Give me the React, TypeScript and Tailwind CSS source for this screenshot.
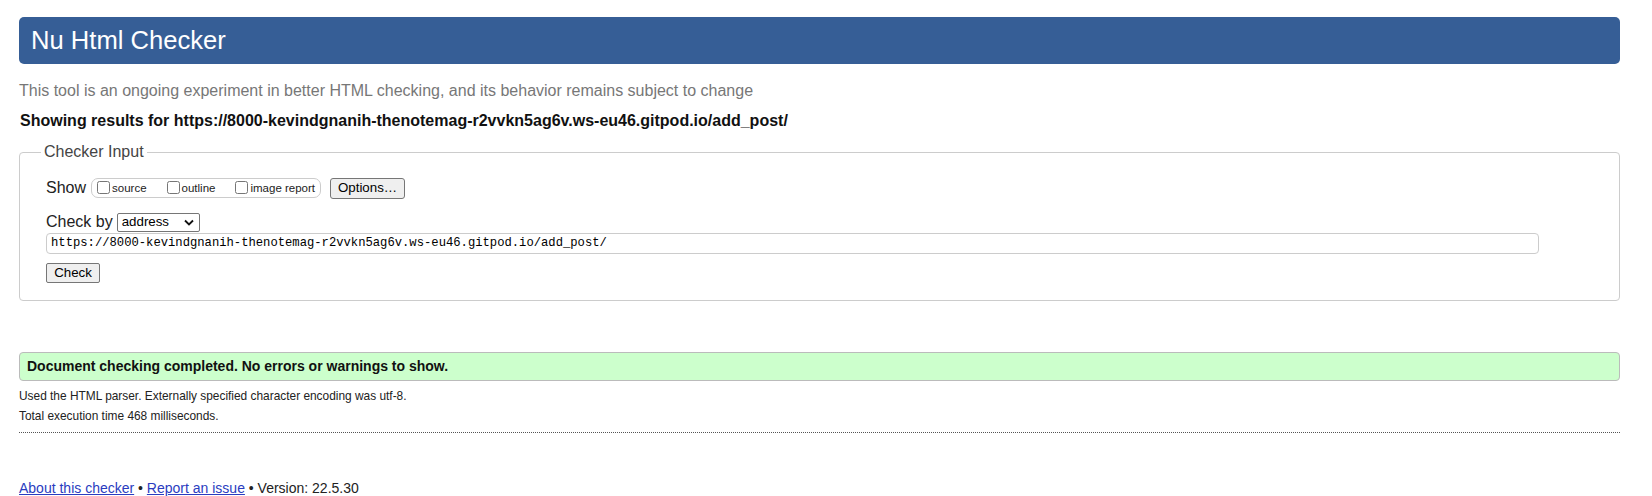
import React from 'react';

const CHECK_URL = 'https://8000-kevindgnanih-thenotemag-r2vvkn5ag6v.ws-eu46.gitpod.io/add_post/';

function ShowOption({label}: {label: string}) {
  return (
    <label className="flex items-end gap-[2px]">
      <input type="checkbox" className="w-[13px] h-[13px] m-0 mb-[1px]" />
      <span className="text-[11.5px] leading-[14px] text-[#222]">{label}</span>
    </label>
  );
}

export default function App() {
  return (
    <div className="w-[1652px] h-[496px] overflow-hidden bg-white pt-[17px] pl-[19px] font-['Liberation_Sans',Arial,sans-serif] text-[#222]">
      <div className="w-[1601px]">
        {/* title bar */}
        <h1 className="h-[47px] rounded-[5px] bg-[#365e96] pl-[12px] text-[25.6px] leading-[47px] text-white">Nu Html Checker</h1>

        <p className="mt-[17px] text-[16px] leading-[20px] text-[#777]">
          This tool is an ongoing experiment in better HTML checking, and its behavior remains subject to change
        </p>
        <p className="mt-[10px] pl-[1px] text-[16px] leading-[20px] font-bold text-[#111]">
          Showing results for {CHECK_URL}
        </p>

        {/* checker input */}
        <fieldset className="mt-[12px] rounded-[4px] border border-[#ccc] pl-[21px] pr-[20px] pb-[16px]">
          <legend className="px-[3px] text-[16px] leading-[18px] text-[#444]">Checker Input</legend>
          <div className="pl-[5px]">
            <div className="mt-[17px] flex h-[20px] items-center">
              <span className="text-[16px] leading-[18px]">Show</span>
              <div className="ml-[5px] flex h-[20px] items-center gap-[20px] rounded-[7px] border border-[#ccc] pl-[5px] pr-[5px]">
                <ShowOption label="source" />
                <ShowOption label="outline" />
                <ShowOption label="image report" />
              </div>
              <button className="ml-[9px] h-[21px] w-[75px] rounded-[3px] border border-[#767676] bg-[#efefef] text-[13.3px] leading-[18px] text-black">
                Options…
              </button>
            </div>

            <div className="mt-[15px] flex h-[18px] items-center">
              <span className="text-[16px] leading-[18px]">Check by</span>
              <div className="ml-[4px] flex h-[19px] w-[83px] items-center justify-between rounded-[2px] border border-[#767676] pl-[4px] pr-[5px] text-[13.3px] text-black">
                <span>address</span>
                <svg width="10" height="7" viewBox="0 0 10 7" fill="none">
                  <path d="M1 1.5l4 4 4-4" stroke="#111" strokeWidth="1.8" />
                </svg>
              </div>
            </div>

            <div className="mt-[2px] flex h-[21px] w-[1493px] items-center rounded-[4px] border border-[#ccc] pl-[4px] font-['Liberation_Mono',monospace] text-[12.2px] text-black">
              {CHECK_URL}
            </div>

            <button className="mt-[9px] h-[20px] w-[54px] rounded-[2px] border border-[#767676] bg-[#efefef] text-[13.3px] leading-[18px] text-black">
              Check
            </button>
          </div>
        </fieldset>

        {/* result */}
        <div className="mt-[51px] flex h-[29px] items-center rounded-[4px] border border-[#bbb] bg-[#ccffcc] pl-[7px] text-[14px] font-bold text-[#111]">
          Document checking completed. No errors or warnings to show.
        </div>
        <p className="mt-[6px] text-[11.9px] leading-[18px] text-[#222]">
          Used the HTML parser. Externally specified character encoding was utf-8.
        </p>
        <p className="mt-[2px] text-[11.9px] leading-[18px] text-[#222]">Total execution time 468 milliseconds.</p>
        <div className="mt-[7px] border-t border-dotted border-[#555]" />

        {/* footer */}
        <p className="mt-[45px] text-[14px] leading-[20px] text-[#222]">
          <a href="#" className="text-[#2a3cc0] underline">About this checker</a>
          {' • '}
          <a href="#" className="text-[#2a3cc0] underline">Report an issue</a>
          {' • Version: 22.5.30'}
        </p>
      </div>
    </div>
  );
}
